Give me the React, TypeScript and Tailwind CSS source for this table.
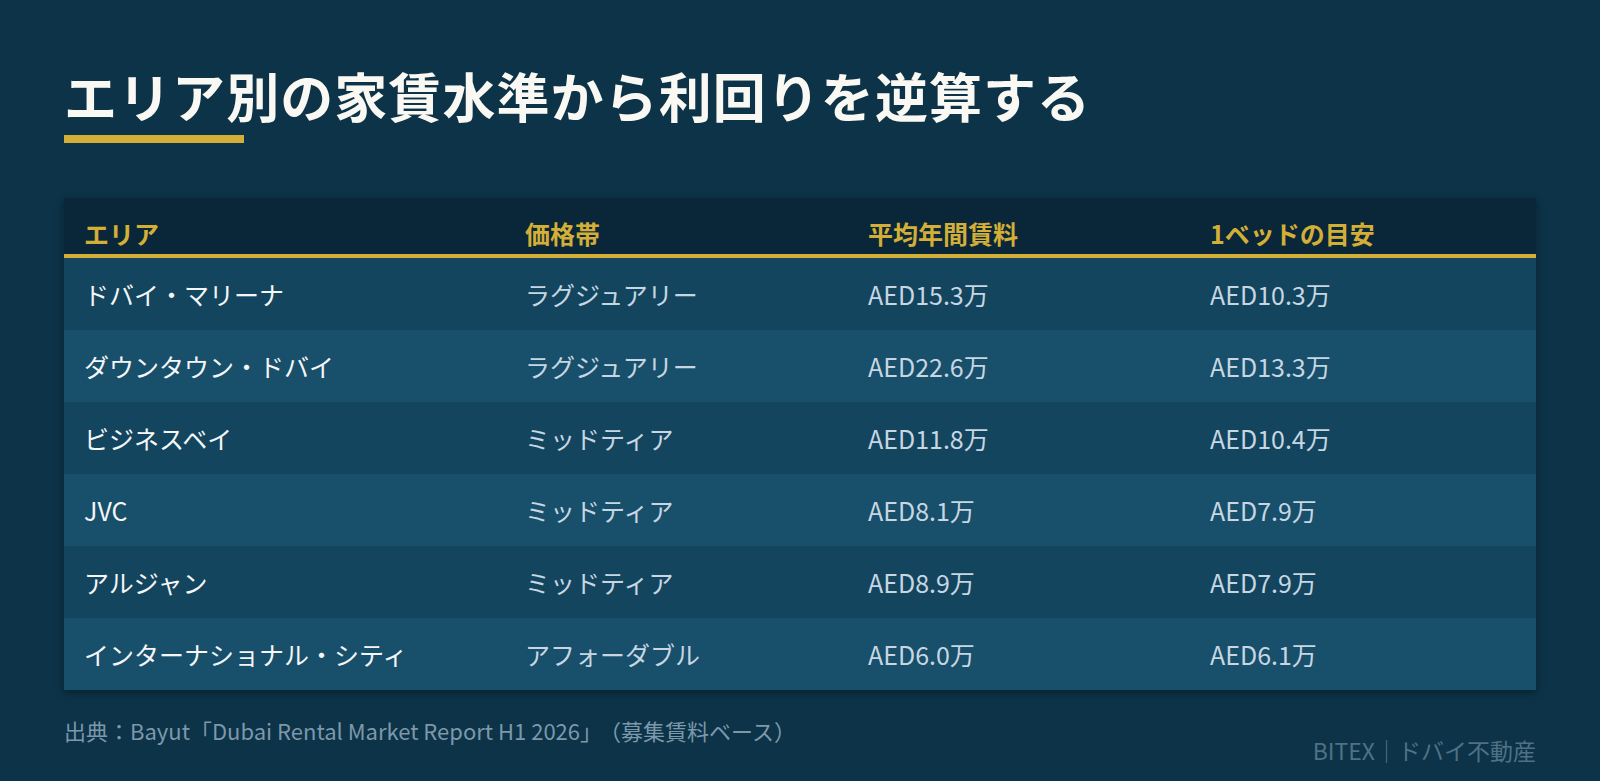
import React from "react";

const rows = [
  ["ドバイ・マリーナ", "ラグジュアリー", "AED15.3万", "AED10.3万"],
  ["ダウンタウン・ドバイ", "ラグジュアリー", "AED22.6万", "AED13.3万"],
  ["ビジネスベイ", "ミッドティア", "AED11.8万", "AED10.4万"],
  ["JVC", "ミッドティア", "AED8.1万", "AED7.9万"],
  ["アルジャン", "ミッドティア", "AED8.9万", "AED7.9万"],
  ["インターナショナル・シティ", "アフォーダブル", "AED6.0万", "AED6.1万"],
];

const headers = ["エリア", "価格帯", "平均年間賃料", "1ベッドの目安"];

export default function App() {
  return (
    <div
      className="w-[1600px] h-[781px] overflow-hidden bg-[#0c3347] px-[64px] pt-[64px]"
      style={{ fontFamily: '"Noto Sans CJK JP", "Noto Sans", sans-serif' }}
    >
      <h1 className="text-[53px] leading-[62px] font-bold text-[#faf8f3] tracking-[0.02em]">
        エリア別の家賃水準から利回りを逆算する
      </h1>
      <div className="mt-[9px] h-[8px] w-[180px] bg-[#d4af37]" />

      <div className="mt-[55px] shadow-[0_3px_8px_rgba(0,0,0,0.35)]">
        <div className="grid grid-cols-[441px_343px_342px_1fr] bg-[#0a2639] border-b-4 border-[#d4af37] h-[60px]">
          {headers.map((h) => (
            <div
              key={h}
              className="pl-[20px] pt-[20px] text-[25px] leading-[30px] font-bold text-[#d4af37]"
            >
              {h}
            </div>
          ))}
        </div>
        {rows.map((r, i) => (
          <div
            key={i}
            className={
              "grid grid-cols-[441px_343px_342px_1fr] h-[72px] items-center " +
              (i % 2 === 0 ? "bg-[#13455e]" : "bg-[#184f6a]")
            }
          >
            {r.map((c, j) => (
              <div
                key={j}
                className={
                  "pl-[20px] text-[25px] leading-[30px] " +
                  (j === 0 ? "text-[#f4f6f8]" : "text-[#c6d6e2]")
                }
              >
                {c}
              </div>
            ))}
          </div>
        ))}
      </div>

      <div className="flex justify-between items-start mt-[24px]">
        <div className="text-[22px] leading-[33px] text-[#7d98ab]">
          出典：Bayut「Dubai Rental Market Report H1 2026」
          <span className="ml-[8px]">（募集賃料ベース）</span>
        </div>
        <div className="mt-[19px] text-[23px] leading-[34px] text-[#4f7186]">
          BITEX｜ドバイ不動産
        </div>
      </div>
    </div>
  );
}
